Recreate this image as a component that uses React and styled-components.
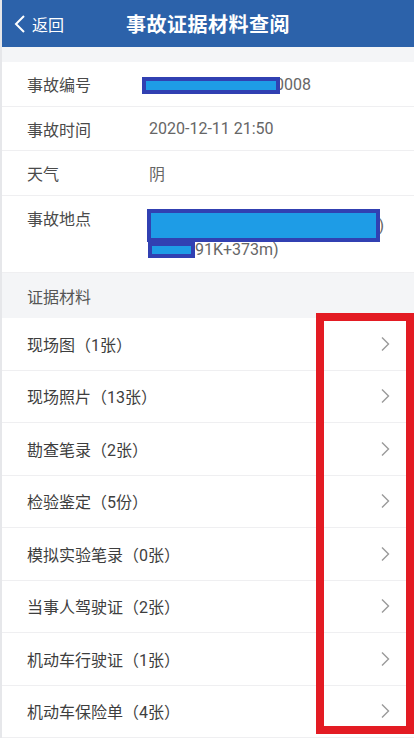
import React from "react";
import styled, { createGlobalStyle } from "styled-components";

const GlobalStyle = createGlobalStyle`
  body {
    margin: 0;
    background: #f4f5f7;
    font-family: Roboto, "Noto Sans CJK SC", sans-serif;
  }
`;

const Page = styled.div`
  position: relative;
  width: 414px;
  height: 738px;
  overflow: hidden;
  background: #f4f5f7;
  border-left: 2px solid #e6e7ea;
  box-sizing: border-box;
`;

const Header = styled.div`
  position: relative;
  height: 47px;
  background: #2c62aa;
  display: flex;
  align-items: center;
  justify-content: center;
`;

const Back = styled.div`
  position: absolute;
  left: 12px;
  top: 0;
  bottom: 0;
  display: flex;
  align-items: center;
  gap: 6px;
  color: #fff;
  font-size: 16px;
`;

const Title = styled.h1`
  margin: 0;
  color: #fff;
  font-size: 20px;
  font-weight: 700;
  letter-spacing: 0.5px;
`;

const Gap = styled.div`
  height: 15px;
`;

const Info = styled.div`
  background: #fff;
`;

const InfoRow = styled.div`
  display: flex;
  align-items: ${(p) => (p.$top ? "flex-start" : "center")};
  min-height: ${(p) => p.$h || 44}px;
  padding: ${(p) => (p.$top ? "10px 0 10px" : "0")};
  padding-left: 25px;
  border-bottom: 1px solid #efeff1;
  box-sizing: border-box;
  font-size: 16px;
`;

const Label = styled.div`
  width: 122px;
  flex-shrink: 0;
  color: #4a4a4a;
`;

const Value = styled.div`
  position: relative;
  color: #666;
  line-height: ${(p) => (p.$multi ? "24px" : "normal")};
  margin-top: ${(p) => (p.$multi ? "8px" : "0")};
`;

const Spacer = styled.span`
  display: inline-block;
  width: ${(p) => p.$w}px;
`;

const Redact = styled.div`
  position: absolute;
  background: #1e9ce6;
  border: 4px solid #3140b2;
  box-sizing: border-box;
`;

const Section = styled.div`
  height: 45px;
  display: flex;
  align-items: center;
  padding-left: 25px;
  font-size: 16px;
  color: #555;
`;

const List = styled.div`
  background: #fff;
`;

const Item = styled.div`
  height: 52.5px;
  display: flex;
  align-items: center;
  justify-content: space-between;
  padding: 0 24px 0 25px;
  border-bottom: 1px solid #efeff1;
  box-sizing: border-box;
  font-size: 16px;
  color: #3e3e3e;
`;

const Mark = styled.div`
  position: absolute;
  left: 314px;
  top: 313px;
  width: 98px;
  height: 421px;
  border: 8px solid #e31b23;
  box-sizing: border-box;
  pointer-events: none;
`;

const Chevron = () => (
  <svg width="10" height="16" viewBox="0 0 10 16">
    <path d="M2 1.5 L8.5 8 L2 14.5" fill="none" stroke="#9a9a9a" strokeWidth="1.4" />
  </svg>
);

const BackArrow = () => (
  <svg width="12" height="20" viewBox="0 0 12 20">
    <path d="M10 2 L2 10 L10 18" fill="none" stroke="#fff" strokeWidth="2" />
  </svg>
);

const items = [
  "现场图（1张）",
  "现场照片（13张）",
  "勘查笔录（2张）",
  "检验鉴定（5份）",
  "模拟实验笔录（0张）",
  "当事人驾驶证（2张）",
  "机动车行驶证（1张）",
  "机动车保险单（4张）",
];

export default function App() {
  return (
    <Page>
      <GlobalStyle />
      <Header>
        <Back>
          <BackArrow />
          <span>返回</span>
        </Back>
        <Title>事故证据材料查阅</Title>
      </Header>
      <Gap />
      <Info>
        <InfoRow $h={45}>
          <Label>事故编号</Label>
          <Value>
            <Spacer $w={126} />
            0008
            <Redact style={{ left: -7, top: 2, width: 138, height: 17 }} />
          </Value>
        </InfoRow>
        <InfoRow>
          <Label>事故时间</Label>
          <Value>2020-12-11 21:50</Value>
        </InfoRow>
        <InfoRow $h={45}>
          <Label>天气</Label>
          <Value>阴</Value>
        </InfoRow>
        <InfoRow $top>
          <Label>事故地点</Label>
          <Value $multi>
            <div style={{ width: 235, textAlign: "right" }}>)</div>
            <div>
              <Spacer $w={46} />
              91K+373m)
            </div>
            <Redact style={{ left: -2, top: -5, width: 233, height: 33 }} />
            <Redact style={{ left: -1, top: 28, width: 47, height: 16 }} />
          </Value>
        </InfoRow>
      </Info>
      <Section>证据材料</Section>
      <List>
        {items.map((t) => (
          <Item key={t}>
            <span>{t}</span>
            <Chevron />
          </Item>
        ))}
      </List>
      <Mark />
    </Page>
  );
}
